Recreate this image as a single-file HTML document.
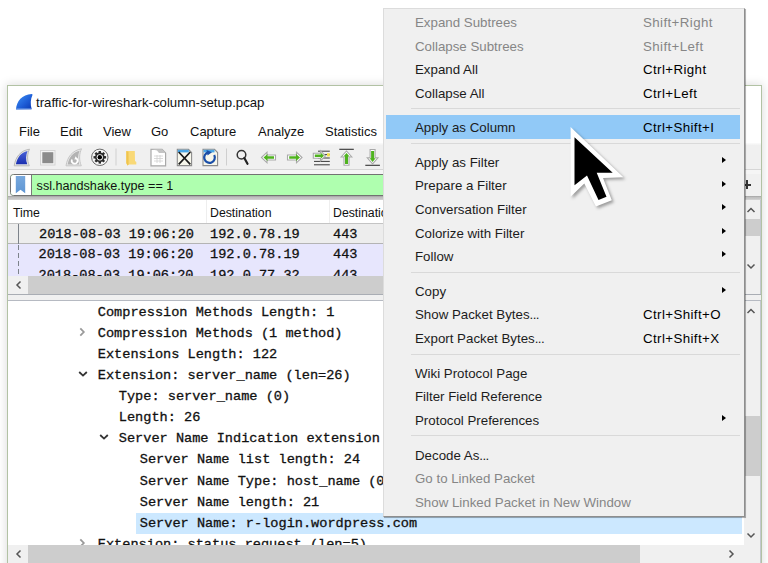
<!DOCTYPE html>
<html><head><meta charset="utf-8">
<style>
*{margin:0;padding:0;box-sizing:border-box}
html,body{width:768px;height:563px;overflow:hidden;background:#fff;font-family:"Liberation Sans",sans-serif;color:#000}
.a{position:absolute;white-space:pre}
.mono{font-family:"Liberation Mono",monospace;font-size:13.6px;line-height:21px;color:#111;-webkit-text-stroke:0.3px #111}
#win{position:absolute;left:7px;top:85px;width:755px;height:490px;background:#fff;border:1.5px solid #b2c2a4;box-shadow:0 0 9px 1px rgba(0,0,0,0.13)}
.menu{position:absolute;left:383px;top:7.5px;width:361.5px;height:509px;background:#f0f0f0;border:1px solid #dcdcdc;border-right-color:#8e8e8e;border-bottom-color:#8e8e8e;box-shadow:0.6px 0.6px 0.6px rgba(0,0,0,0.3)}
.mi{position:absolute;left:31px;font-size:13.3px;line-height:20px;color:#1c1c1c}
.el{letter-spacing:-0.6px}
.dis{color:#868686}
.sc{position:absolute;left:259px;font-size:13.3px;line-height:20px;letter-spacing:0.4px}
.sep{position:absolute;left:27px;width:329px;height:1px;background:#d9d9d9}
.arr{position:absolute;left:338px;width:0;height:0;border-top:3.3px solid transparent;border-bottom:3.3px solid transparent;border-left:4.3px solid #000}
</style></head><body>
<div id="win"></div>

<!-- title & menubar -->
<svg class="a" style="left:0;top:85px" width="40" height="30" viewBox="0 85 40 30">
<defs><linearGradient id="sg" x1="0" y1="0" x2="1" y2="1"><stop offset="0" stop-color="#3f95f7"/><stop offset="0.55" stop-color="#1f5fd8"/><stop offset="1" stop-color="#0a36b0"/></linearGradient></defs>
<path d="M16 109.6 C16.5 101 22 94.5 31.8 93.9 Q33 94 32.4 95.2 C30.6 99 30.2 104 31.7 109.3 Z" fill="url(#sg)"/>
<path d="M16.3 108 H31.3 V109.6 H16 Z" fill="#6d9be6" opacity="0.6"/></svg>
<div class="a" style="left:36px;top:94.3px;font-size:13.2px;line-height:18px;color:#111">traffic-for-wireshark-column-setup.pcap</div>
<div class="a" style="left:19px;top:123px;font-size:13px;line-height:18px;color:#111">File</div>
<div class="a" style="left:60px;top:123px;font-size:13px;line-height:18px;color:#111">Edit</div>
<div class="a" style="left:103px;top:123px;font-size:13px;line-height:18px;color:#111">View</div>
<div class="a" style="left:151px;top:123px;font-size:13px;line-height:18px;color:#111">Go</div>
<div class="a" style="left:190px;top:123px;font-size:13px;line-height:18px;color:#111">Capture</div>
<div class="a" style="left:258px;top:123px;font-size:13px;line-height:18px;color:#111">Analyze</div>
<div class="a" style="left:325px;top:123px;font-size:13px;line-height:18px;color:#111">Statistics</div>

<!-- toolbar -->
<div class="a" style="left:8px;top:143px;width:753px;height:27px;background:linear-gradient(#fbfbfb,#f0f0f0 2.5px);border-bottom:1px solid #d6d6d6"></div>
<div class="a" style="left:8px;top:170px;width:753px;height:29px;background:#f0f0f0"></div>

<svg class="a" style="left:0;top:140px" width="384" height="32" viewBox="0 140 384 32">
<defs>
<linearGradient id="fin" x1="0" y1="0" x2="0" y2="1"><stop offset="0" stop-color="#4a63d8"/><stop offset="1" stop-color="#1a2fb0"/></linearGradient>
</defs>
<!-- shark fin -->
<path d="M14.2 165.8 C15.5 157 20.5 150.5 29.5 149.2 C27.2 153.5 26.8 160 29.3 165.8 Z" fill="#e6e6e6" stroke="#b9b9b9" stroke-width="1"/>
<path d="M15.9 164.3 C17.3 157.5 21 152.2 27.6 151 C25.8 155 25.5 160 27.3 164.3 Z" fill="url(#fin)"/>
<!-- stop -->
<rect x="40.5" y="150.5" width="14.5" height="14.5" fill="#f3f3f3" stroke="#d4d4d4" stroke-width="1"/>
<rect x="42.3" y="152.2" width="11" height="11" fill="#8b8b8b"/>
<!-- restart fin gray -->
<path d="M66 165.8 C67.3 157 72.3 150.5 81.5 148.8 C79.3 153.5 78.8 160 81.3 165.8 Z" fill="#e8e8e8" stroke="#c6c6c6" stroke-width="1"/>
<path d="M67.6 164.4 C69 157.5 72.8 152.2 79.6 150.7 C77.8 155 77.4 160 79.3 164.4 Z" fill="#b3b3b3"/>
<path d="M72 159.5 A2.9 2.9 0 1 0 76.6 158.6" fill="none" stroke="#fff" stroke-width="1.7"/>
<path d="M75.6 156.3 L77.9 159.2 L74.4 159.6 Z" fill="#fff"/>
<!-- gear -->
<circle cx="99.8" cy="157.3" r="8.2" fill="#f7f7f7" stroke="#5a5a5a" stroke-width="0.9"/>
<circle cx="99.8" cy="157.3" r="4.8" fill="#2a2a2a"/>
<rect x="98.60" y="151.00" width="2.4" height="3" fill="#2a2a2a" transform="rotate(0 99.8 157.3)"/><rect x="98.60" y="151.00" width="2.4" height="3" fill="#2a2a2a" transform="rotate(45 99.8 157.3)"/><rect x="98.60" y="151.00" width="2.4" height="3" fill="#2a2a2a" transform="rotate(90 99.8 157.3)"/><rect x="98.60" y="151.00" width="2.4" height="3" fill="#2a2a2a" transform="rotate(135 99.8 157.3)"/><rect x="98.60" y="151.00" width="2.4" height="3" fill="#2a2a2a" transform="rotate(180 99.8 157.3)"/><rect x="98.60" y="151.00" width="2.4" height="3" fill="#2a2a2a" transform="rotate(225 99.8 157.3)"/><rect x="98.60" y="151.00" width="2.4" height="3" fill="#2a2a2a" transform="rotate(270 99.8 157.3)"/><rect x="98.60" y="151.00" width="2.4" height="3" fill="#2a2a2a" transform="rotate(315 99.8 157.3)"/>
<circle cx="99.8" cy="157.3" r="3.1" fill="#fff"/>
<circle cx="99.8" cy="157.3" r="2.2" fill="#000"/>
<!-- separators -->
<rect x="115.5" y="148.5" width="1" height="17" fill="#cfcfcf"/>
<rect x="226" y="148.5" width="1" height="17" fill="#cfcfcf"/>
<!-- folder -->
<path d="M126.3 151 L134.8 151 L135 161 L136.3 162 L136.3 164.5 L129 164.5 L127.5 165.5 L126.3 163 Z" fill="#f9d977"/>
<path d="M126.3 151 L128.5 151.8 L128.6 164.6 L127.5 165.5 L126.3 163 Z" fill="#f0c44e"/>
<!-- document -->
<path d="M151 149.3 L162 149.3 L165.6 153 L165.6 165.8 L151 165.8 Z" fill="#fff" stroke="#a8a8a8" stroke-width="1.2"/>
<path d="M151 149.3 L162 149.3 L165.6 153 L159 153 L157 150.5 Z" fill="#c4c4c4"/>
<path d="M154 156 H163 M154 158.5 H163 M154 161 H163 M157 155 V163 M160 155 V163" stroke="#d0d0d0" stroke-width="0.8"/>
<!-- close doc -->
<path d="M177.3 149.3 L188.5 149.3 L191.6 152.5 L191.6 165.6 L177.3 165.6 Z" fill="#f7f7ec" stroke="#8c8c8c" stroke-width="1.1"/>
<rect x="177.8" y="149.8" width="11" height="2.6" fill="#4aa6e6"/>
<path d="M178.7 152 L190.3 164.3 M190.3 152 L178.7 164.3" stroke="#1a1a1a" stroke-width="1.7"/>
<!-- reload doc -->
<path d="M203 149.3 L214.5 149.3 L217.6 152.5 L217.6 165.6 L203 165.6 Z" fill="#f7f7ec" stroke="#8c8c8c" stroke-width="1.1"/>
<rect x="203.5" y="149.8" width="11" height="2.6" fill="#4aa6e6"/>
<path d="M214.2 155 A5.3 5.3 0 1 1 208.5 152.3" fill="none" stroke="#1a4ea8" stroke-width="2.2"/>
<path d="M206.5 150 L212 152.3 L207.5 155.5 Z" fill="#1a4ea8"/>
<!-- magnifier -->
<circle cx="241.5" cy="154.8" r="4.3" fill="none" stroke="#333" stroke-width="1.5"/>
<path d="M244.3 158 L247.5 163.8" stroke="#222" stroke-width="2.2" stroke-linecap="round"/>
<!-- left arrow -->
<path d="M261.5 157.5 L267 152.2 L267 155 L275.5 155 L275.5 160 L267 160 L267 162.8 Z" fill="#fff" stroke="#a9a9a9" stroke-width="1.1"/>
<path d="M263.5 157.5 L267.5 154 L267.5 156.2 L274 156.2 L274 158.8 L267.5 158.8 L267.5 161 Z" fill="#4fb31f"/>
<!-- right arrow -->
<path d="M302 157.5 L296.5 152.2 L296.5 155 L287.5 155 L287.5 160 L296.5 160 L296.5 162.8 Z" fill="#fff" stroke="#a9a9a9" stroke-width="1.1"/>
<path d="M300 157.5 L296 154 L296 156.2 L289.2 156.2 L289.2 158.8 L296 158.8 L296 161 Z" fill="#4fb31f"/>
<!-- go to packet -->
<path d="M318 151.2 H329.8 M318 154.6 H329.8 M318 158 H329.8 M314 161.4 H329.8 M314 164.8 H329.8" stroke="#3a3a3a" stroke-width="1"/>
<rect x="327" y="153.2" width="2.8" height="3.2" fill="#f5e14a"/>
<path d="M325.5 155.8 L320.5 150.8 L320.5 153.3 L313.3 153.3 L313.3 158.3 L320.5 158.3 L320.5 160.8 Z" fill="#fff" stroke="#a9a9a9" stroke-width="1.1"/>
<path d="M324 155.8 L320.8 152.8 L320.8 154.6 L314.8 154.6 L314.8 157 L320.8 157 L320.8 158.8 Z" fill="#4fb31f"/>
<!-- first packet -->
<path d="M339.3 149.3 H353.8" stroke="#333" stroke-width="1.1"/>
<path d="M346.5 151 L351.8 157 L349 157 L349 165.3 L344 165.3 L344 157 L341.2 157 Z" fill="#fff" stroke="#a9a9a9" stroke-width="1.1"/>
<path d="M346.5 153 L349.5 156.6 L348 156.6 L348 164 L345 164 L345 156.6 L343.5 156.6 Z" fill="#4fb31f"/>
<!-- last packet -->
<path d="M365.3 165.3 H379.9" stroke="#333" stroke-width="1.1"/>
<path d="M372.6 163.8 L377.9 157.8 L375.1 157.8 L375.1 149.5 L370.1 149.5 L370.1 157.8 L367.3 157.8 Z" fill="#fff" stroke="#a9a9a9" stroke-width="1.1"/>
<path d="M372.6 162 L375.6 158.3 L374.1 158.3 L374.1 151 L371.1 151 L371.1 158.3 L369.6 158.3 Z" fill="#4fb31f"/>
</svg>

<!-- filter bar -->
<div class="a" style="left:8px;top:170px;width:753px;height:4px;background:#f5f5f5"></div>
<div class="a" style="left:9.5px;top:174px;width:726px;height:22px;background:#afffaf;border:1px solid #727272;border-radius:3.5px"></div>
<div class="a" style="left:10.5px;top:175px;width:20.5px;height:20px;background:#fff;border-radius:2.5px 0 0 2.5px"></div>
<div class="a" style="left:31px;top:175px;width:1px;height:20px;background:#7a7a7a"></div>
<div class="a" style="left:744px;top:183.6px;width:7px;height:2px;background:#333"></div><div class="a" style="left:745.6px;top:180.2px;width:2.2px;height:9.3px;background:#333"></div>
<svg class="a" style="left:15px;top:175px" width="11" height="19" viewBox="0 0 11 19"><defs><linearGradient id="bm" x1="0" y1="0" x2="0" y2="1"><stop offset="0" stop-color="#77a8de"/><stop offset="1" stop-color="#5f96d3"/></linearGradient></defs><path d="M0.8 1 H10.2 V18.2 L5.5 14.8 L0.8 18.2 Z" fill="url(#bm)"/></svg>
<div class="a" style="left:36.6px;top:179px;font-size:12.62px;line-height:14px;color:#111">ssl.handshake.type == 1</div>
<div class="a" style="left:8px;top:196px;width:753px;height:4px;background:linear-gradient(#9c9c9c 0,#bdbdbd 1px,#c8c8c8 3px,#d8d8d8 4px)"></div>

<!-- packet list -->
<div class="a" style="left:8px;top:200px;width:736px;height:23px;background:#fff"></div>
<div class="a" style="left:206px;top:200px;width:1px;height:23px;background:#eeeeee"></div>
<div class="a" style="left:329px;top:200px;width:1px;height:23px;background:#eeeeee"></div>
<div class="a" style="left:13px;top:205.3px;font-size:12.3px;line-height:16px;color:#111">Time</div>
<div class="a" style="left:210px;top:205.3px;font-size:12.3px;line-height:16px;color:#111">Destination</div>
<div class="a" style="left:333px;top:205.3px;font-size:12.3px;line-height:16px;color:#111">Destinatio</div>

<div class="a" style="left:8px;top:223.2px;width:736px;height:21px;background:#ededed;border-top:1.2px solid #c4c4c4;border-bottom:1px solid #b4b4b4"></div>
<div class="a" style="left:8px;top:244px;width:736px;height:32px;background:#e7e6fd"></div>
<div class="a" style="left:18px;top:224px;width:1px;height:19.5px;background:#7d838b"></div>
<div class="a" style="left:18px;top:244px;width:1px;height:32px;background:repeating-linear-gradient(transparent 0 1px,#7d838b 1px 6px,transparent 6px 8px)"></div>
<div class="a" style="left:8px;top:223px;width:736px;height:53px;overflow:hidden">
 <div class="a mono" style="left:31px;top:1px">2018-08-03 19:06:20</div>
 <div class="a mono" style="left:202px;top:1px">192.0.78.19</div>
 <div class="a mono" style="left:325px;top:1px">443</div>
 <div class="a mono" style="left:30.5px;top:21px">2018-08-03 19:06:20</div>
 <div class="a mono" style="left:202px;top:21px">192.0.78.19</div>
 <div class="a mono" style="left:325px;top:21px">443</div>
 <div class="a mono" style="left:30.5px;top:41.5px">2018-08-03 19:06:20</div>
 <div class="a mono" style="left:202px;top:41.5px">192.0.77.32</div>
 <div class="a mono" style="left:325px;top:41.5px">443</div>
</div>
<!-- packet list vscroll -->
<div class="a" style="left:744px;top:200px;width:16px;height:76px;background:#f0f0f0"></div>
<div class="a" style="left:745px;top:219px;width:15px;height:17px;background:#cdcdcd"></div>
<!-- packet list hscroll -->
<div class="a" style="left:8px;top:276px;width:736px;height:18px;background:#f0f0f0"></div>
<div class="a" style="left:28px;top:276px;width:716px;height:17.5px;background:#cdcdcd"></div>
<div class="a" style="left:744px;top:276px;width:17px;height:18px;background:#f0f0f0"></div>
<div class="a" style="left:8px;top:294px;width:753px;height:1px;background:#a9adb4"></div>
<div class="a" style="left:8px;top:295px;width:753px;height:5px;background:#f0f0f0"></div>
<div class="a" style="left:8px;top:300px;width:753px;height:1px;background:#b6bac2"></div>

<!-- details pane -->
<div class="a" style="left:136px;top:512.5px;width:606px;height:21px;background:#cce8ff"></div>
<div class="a mono" style="left:97.8px;top:301.7px">Compression Methods Length: 1</div>
<div class="a mono" style="left:97.8px;top:322.8px">Compression Methods (1 method)</div>
<div class="a mono" style="left:97.8px;top:343.9px">Extensions Length: 122</div>
<div class="a mono" style="left:97.8px;top:365.0px">Extension: server_name (len=26)</div>
<div class="a mono" style="left:118.8px;top:386.1px">Type: server_name (0)</div>
<div class="a mono" style="left:118.8px;top:407.2px">Length: 26</div>
<div class="a mono" style="left:118.8px;top:428.3px">Server Name Indication extension</div>
<div class="a mono" style="left:139.8px;top:449.4px">Server Name list length: 24</div>
<div class="a mono" style="left:139.8px;top:470.5px">Server Name Type: host_name (0)</div>
<div class="a mono" style="left:139.8px;top:491.6px">Server Name length: 21</div>
<div class="a mono" style="left:139.8px;top:512.7px">Server Name: r-login.wordpress.com</div>
<div class="a" style="left:8px;top:533px;width:736px;height:12px;overflow:hidden">
 <div class="a mono" style="left:89.8px;top:0.8px">Extension: status_request (len=5)</div>
</div>
<svg class="a" style="left:78px;top:327.3px" width="9" height="10" viewBox="0 0 9 10"><path d="M2.3 1.3 L5.8 5 L2.3 8.7" fill="none" stroke="#9a9a9a" stroke-width="1.8"/></svg>
<svg class="a" style="left:77.5px;top:370.0px" width="10" height="8" viewBox="0 0 10 8"><path d="M1.2 2 L5 5.6 L8.8 2" fill="none" stroke="#333" stroke-width="1.8"/></svg>
<svg class="a" style="left:99.0px;top:433.3px" width="10" height="8" viewBox="0 0 10 8"><path d="M1.2 2 L5 5.6 L8.8 2" fill="none" stroke="#333" stroke-width="1.8"/></svg>
<svg class="a" style="left:78px;top:538.3px" width="9" height="10" viewBox="0 0 9 10"><path d="M2.3 1.3 L5.8 5 L2.3 8.7" fill="none" stroke="#9a9a9a" stroke-width="1.8"/></svg>

<!-- details vscroll -->
<div class="a" style="left:744px;top:301px;width:16px;height:244px;background:#f0f0f0"></div>
<div class="a" style="left:745px;top:416px;width:15px;height:60px;background:#cdcdcd"></div>
<!-- details hscroll -->
<div class="a" style="left:8px;top:545px;width:736px;height:18px;background:#f0f0f0"></div>
<div class="a" style="left:28px;top:545px;width:612px;height:18px;background:#cdcdcd"></div>
<div class="a" style="left:744px;top:545px;width:17px;height:18px;background:#f0f0f0"></div>


<svg class="a" style="left:0;top:195px" width="768" height="368" viewBox="0 195 768 368">
<path d="M747.5 212 L751 208.5 L754.5 212" fill="none" stroke="#555" stroke-width="1.5"/>
<path d="M747.5 264.5 L751 268 L754.5 264.5" fill="none" stroke="#555" stroke-width="1.5"/>
<path d="M20.5 281.5 L17 285 L20.5 288.5" fill="none" stroke="#555" stroke-width="1.5"/>
<path d="M747.5 313 L751 309.5 L754.5 313" fill="none" stroke="#555" stroke-width="1.5"/>
<path d="M747.5 533.5 L751 537 L754.5 533.5" fill="none" stroke="#555" stroke-width="1.5"/>
<path d="M20.5 550.5 L17 554 L20.5 557.5" fill="none" stroke="#555" stroke-width="1.5"/>
<path d="M729.5 550.5 L733 554 L729.5 557.5" fill="none" stroke="#555" stroke-width="1.5"/>
</svg>

<div class="a" style="left:760px;top:200px;width:1px;height:94px;background:#c3c7cf"></div>
<div class="a" style="left:760px;top:301px;width:1px;height:262px;background:#c3c7cf"></div>
<!-- context menu -->
<div class="menu">
 <div class="a" style="left:2px;top:106.7px;width:353.6px;height:23.6px;background:#91c9f7"></div>
 <div class="sep" style="top:99.2px"></div>
 <div class="sep" style="top:134.3px"></div>
 <div class="sep" style="top:263.3px"></div>
 <div class="sep" style="top:345.1px"></div>
 <div class="sep" style="top:426.7px"></div>
 <div class="mi dis" style="top:4.7px">Expand Subtrees</div><div class="sc dis" style="top:4.7px">Shift+Right</div>
 <div class="mi dis" style="top:28.1px">Collapse Subtrees</div><div class="sc dis" style="top:28.1px">Shift+Left</div>
 <div class="mi" style="top:51.7px">Expand All</div><div class="sc" style="top:51.7px">Ctrl+Right</div>
 <div class="mi" style="top:75.2px">Collapse All</div><div class="sc" style="top:75.2px">Ctrl+Left</div>
 <div class="mi" style="top:109.3px">Apply as Column</div><div class="sc" style="top:109.3px">Ctrl+Shift+I</div>
 <div class="mi" style="top:144.5px">Apply as Filter</div><div class="arr" style="top:148.9px"></div>
 <div class="mi" style="top:167.7px">Prepare a Filter</div><div class="arr" style="top:172.1px"></div>
 <div class="mi" style="top:191.4px">Conversation Filter</div><div class="arr" style="top:195.8px"></div>
 <div class="mi" style="top:215.1px">Colorize with Filter</div><div class="arr" style="top:219.5px"></div>
 <div class="mi" style="top:238.3px">Follow</div><div class="arr" style="top:242.7px"></div>
 <div class="mi" style="top:273.7px">Copy</div><div class="arr" style="top:278.1px"></div>
 <div class="mi" style="top:296.9px">Show Packet Bytes<span class="el">...</span></div><div class="sc" style="top:296.9px">Ctrl+Shift+O</div>
 <div class="mi" style="top:320.6px">Export Packet Bytes<span class="el">...</span></div><div class="sc" style="top:320.6px">Ctrl+Shift+X</div>
 <div class="mi" style="top:355.3px">Wiki Protocol Page</div>
 <div class="mi" style="top:378.8px">Filter Field Reference</div>
 <div class="mi" style="top:402.5px">Protocol Preferences</div><div class="arr" style="top:406.9px"></div>
 <div class="mi" style="top:437.2px">Decode As<span class="el">...</span></div>
 <div class="mi dis" style="top:460.7px">Go to Linked Packet</div>
 <div class="mi dis" style="top:484.2px">Show Linked Packet in New Window</div>
</div>

<!-- cursor -->
<svg class="a" style="left:560px;top:120px" width="75" height="95" viewBox="560 120 75 95">
<defs><filter id="cs" x="-30%" y="-30%" width="160%" height="160%"><feGaussianBlur stdDeviation="1.5"/></filter></defs>
<path d="M572.6 129.1 L572.6 198.7 L586.3 185.4 L597.9 208.5 L613.8 202.3 L605 180 L625.4 179.2 Z" fill="rgba(0,0,0,0.35)" filter="url(#cs)"/>
<path d="M570.6 127.1 L570.6 196.7 L584.3 183.4 L595.9 206.5 L611.8 200.3 L603 178 L623.4 177.2 Z" fill="#fff"/>
<path d="M574.5 137.2 L574.5 185.2 L587 175.4 L598.5 199.9 L606.5 196.7 L596.7 172.7 L612.7 172.7 Z" fill="#000"/>
</svg>
</body></html>
